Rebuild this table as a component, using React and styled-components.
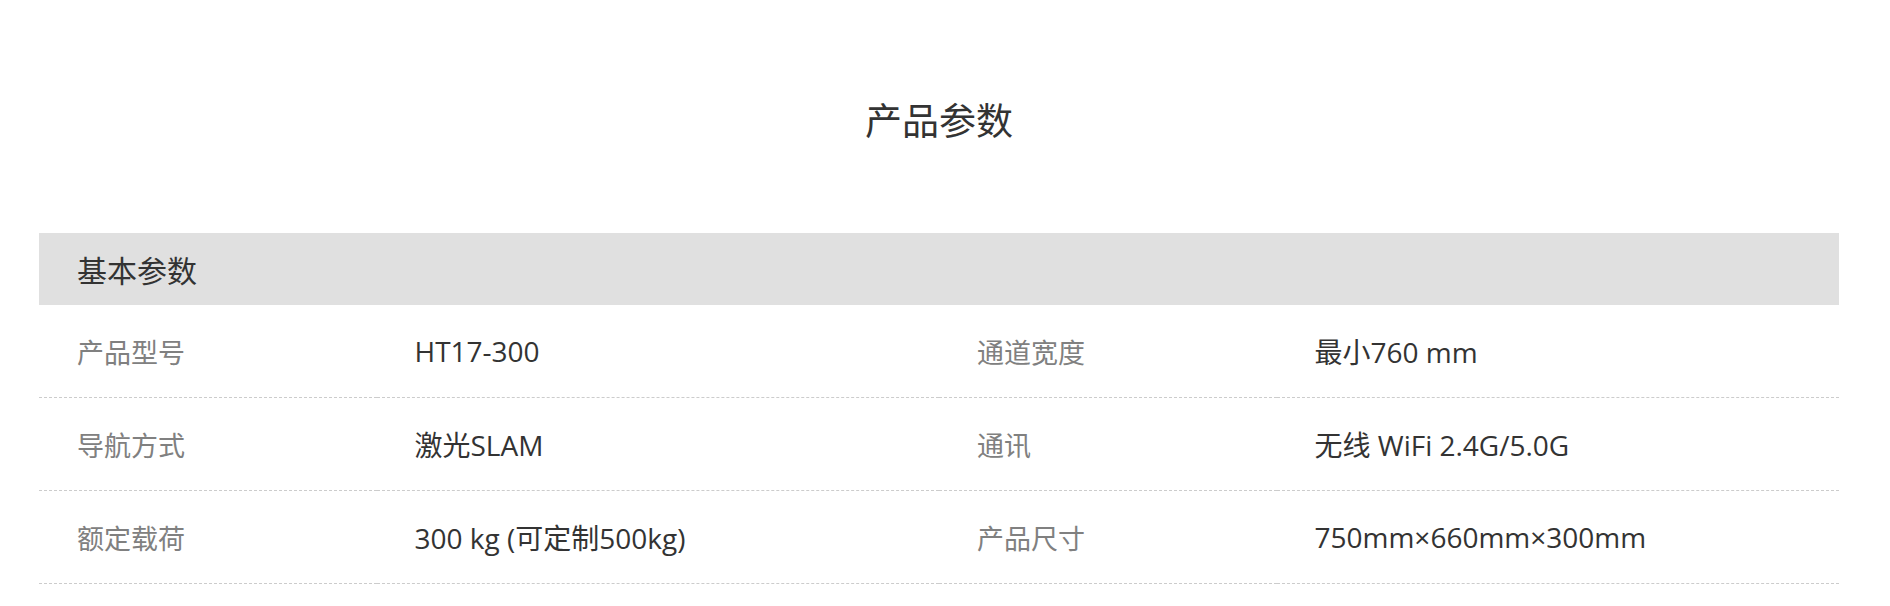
import React from "react";
import styled, { createGlobalStyle } from "styled-components";

const GlobalStyle = createGlobalStyle`
  body {
    margin: 0;
    background: #ffffff;
    font-family: "Open Sans", "Noto Sans CJK SC", sans-serif;
  }
`;

const Page = styled.div`
  padding: 94px 51px 0 39px;
`;

const Title = styled.h2`
  margin: 0 0 85px;
  font-size: 37px;
  line-height: 54px;
  font-weight: 400;
  color: #333333;
  text-align: center;
`;

const Table = styled.table`
  width: 1800px;
  border-collapse: collapse;
  table-layout: fixed;
`;

const HeadCell = styled.th`
  height: 72px;
  padding: 0 0 0 38px;
  background: #e0e0e0;
  font-size: 30px;
  font-weight: 400;
  color: #333333;
  text-align: left;
`;

const Row = styled.tr`
  border-bottom: 1px dashed #cccccc;
`;

const Cell = styled.td`
  height: 92px;
  padding: 0 0 0 38px;
  font-size: ${(p) => (p.$label ? "27px" : "28px")};
  color: ${(p) => (p.$label ? "#808080" : "#333333")};
`;

const rows = [
  ["产品型号", "HT17-300", "通道宽度", "最小760 mm"],
  ["导航方式", "激光SLAM", "通讯", "无线 WiFi 2.4G/5.0G"],
  ["额定载荷", "300 kg (可定制500kg)", "产品尺寸", "750mm×660mm×300mm"],
];

export default function App() {
  return (
    <Page>
      <GlobalStyle />
      <Title>产品参数</Title>
      <Table>
        <colgroup>
          <col style={{ width: "18.75%" }} />
          <col style={{ width: "31.25%" }} />
          <col style={{ width: "18.75%" }} />
          <col style={{ width: "31.25%" }} />
        </colgroup>
        <thead>
          <tr>
            <HeadCell colSpan={4}>基本参数</HeadCell>
          </tr>
        </thead>
        <tbody>
          {rows.map((r, i) => (
            <Row key={i}>
              <Cell $label>{r[0]}</Cell>
              <Cell>{r[1]}</Cell>
              <Cell $label>{r[2]}</Cell>
              <Cell>{r[3]}</Cell>
            </Row>
          ))}
        </tbody>
      </Table>
    </Page>
  );
}
